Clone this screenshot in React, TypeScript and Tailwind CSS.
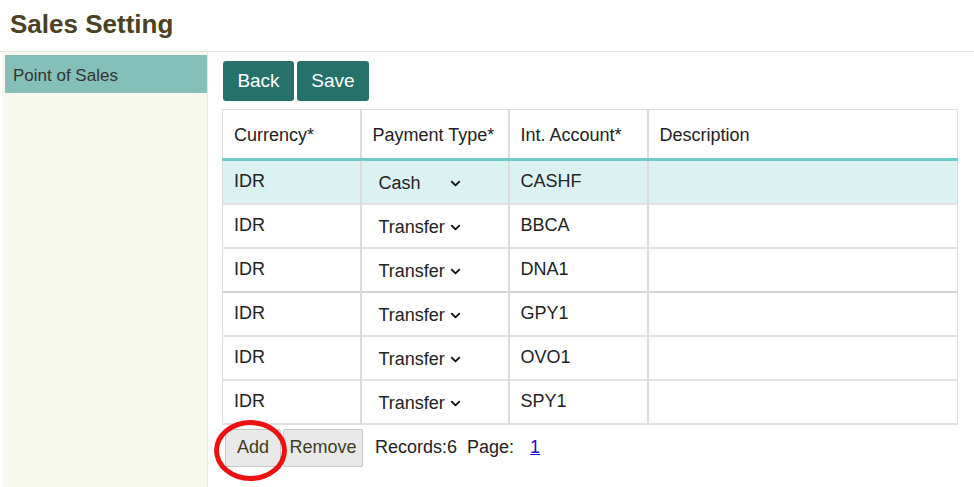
import { ChevronDown } from 'lucide-react'

type Row = {
  currency: string
  payment: string
  account: string
  description: string
}

const rows: Row[] = [
  { currency: 'IDR', payment: 'Cash', account: 'CASHF', description: '' },
  { currency: 'IDR', payment: 'Transfer', account: 'BBCA', description: '' },
  { currency: 'IDR', payment: 'Transfer', account: 'DNA1', description: '' },
  { currency: 'IDR', payment: 'Transfer', account: 'GPY1', description: '' },
  { currency: 'IDR', payment: 'Transfer', account: 'OVO1', description: '' },
  { currency: 'IDR', payment: 'Transfer', account: 'SPY1', description: '' },
]

function PaymentSelect({ value }: { value: string }) {
  return (
    <div className="ml-[6px] mt-[3px] flex w-[84px] items-center justify-between">
      <span>{value}</span>
      <ChevronDown size={15} strokeWidth={3} className="text-[#111]" />
    </div>
  )
}

export default function App() {
  return (
    <div className="min-h-[487px] bg-white font-['Liberation_Sans',Arial,sans-serif] text-[18px] text-[#222]">
      {/* Title */}
      <div className="h-[52px] border-b border-[#e3e3e3] pl-[10px] pt-[5px]">
        <h1 className="text-[26px] font-bold text-[#4a4222]">Sales Setting</h1>
      </div>

      <div className="flex">
        {/* Sidebar */}
        <div className="ml-[2px] min-h-[435px] w-[206px] border-r border-[#e6e9dc] bg-[#f7f9ef] pl-[3px] pt-[3px]">
          <div className="h-[38px] bg-[#85bfba] pl-[8px] pt-[8px] text-[17px] text-[#333]">Point of Sales</div>
        </div>

        {/* Main */}
        <div className="pl-[14px] pt-[9px]">
          <div className="ml-[1px] flex gap-[3px]">
            <button className="h-[40px] w-[71px] rounded-[3px] bg-[#27716c] text-[19px] text-white">Back</button>
            <button className="h-[40px] w-[72px] rounded-[3px] bg-[#27716c] text-[19px] text-white">Save</button>
          </div>

          <table className="mt-[8px] w-[736px] table-fixed border-collapse border border-[#dcdcdc]">
            <colgroup>
              <col className="w-[138px]" />
              <col className="w-[148px]" />
              <col className="w-[139px]" />
              <col />
            </colgroup>
            <thead>
              <tr className="h-[50px] border-b-[3px] border-[#6ccccb] text-left">
                <th className="border-r-2 border-[#dcdcdc] pl-[11px] pt-[2px] font-normal">Currency*</th>
                <th className="border-r-2 border-[#dcdcdc] pl-[11px] pt-[2px] font-normal">Payment Type*</th>
                <th className="border-r-2 border-[#dcdcdc] pl-[11px] pt-[2px] font-normal">Int. Account*</th>
                <th className="pl-[11px] pt-[2px] font-normal">Description</th>
              </tr>
            </thead>
            <tbody>
              {rows.map((r, i) => (
                <tr
                  key={r.account}
                  className={`h-[44px] border-b-2 ${i === 2 ? 'border-[#d4d4d4]' : 'border-[#e2e2e2]'} ${i === 0 ? 'bg-[#dbf2f2]' : 'bg-white'}`}
                >
                  <td className="border-r-2 border-[#dcdcdc] pl-[11px] pb-[1px]">{r.currency}</td>
                  <td className="border-r-2 border-[#dcdcdc] pl-[11px]">
                    <PaymentSelect value={r.payment} />
                  </td>
                  <td className="border-r-2 border-[#dcdcdc] pl-[11px] pb-[1px]">{r.account}</td>
                  <td className="pl-[11px]">{r.description}</td>
                </tr>
              ))}
            </tbody>
          </table>

          {/* Footer */}
          <div className="mt-[4px] flex items-center">
            <div className="relative ml-[3px]">
              <button className="h-[38px] w-[56px] rounded-[2px] border border-[#c8c8c8] bg-[#e9e9e9] text-[18px] text-[#3d3d1e]">Add</button>
              <div className="pointer-events-none absolute left-[-11px] top-[-9px] h-[61px] w-[73px] rounded-[50%] border-[5px] border-[#ee1111]" />
            </div>
            <button className="ml-[2px] h-[38px] w-[80px] rounded-[2px] border border-[#c8c8c8] bg-[#e9e9e9] text-[18px] text-[#3d3d1e]">Remove</button>
            <span className="ml-[12px]">Records:6</span>
            <span className="ml-[10px]">Page:</span>
            <a href="#" className="ml-[16px] text-[#1a0dcc] underline">1</a>
          </div>
        </div>
      </div>
    </div>
  )
}
